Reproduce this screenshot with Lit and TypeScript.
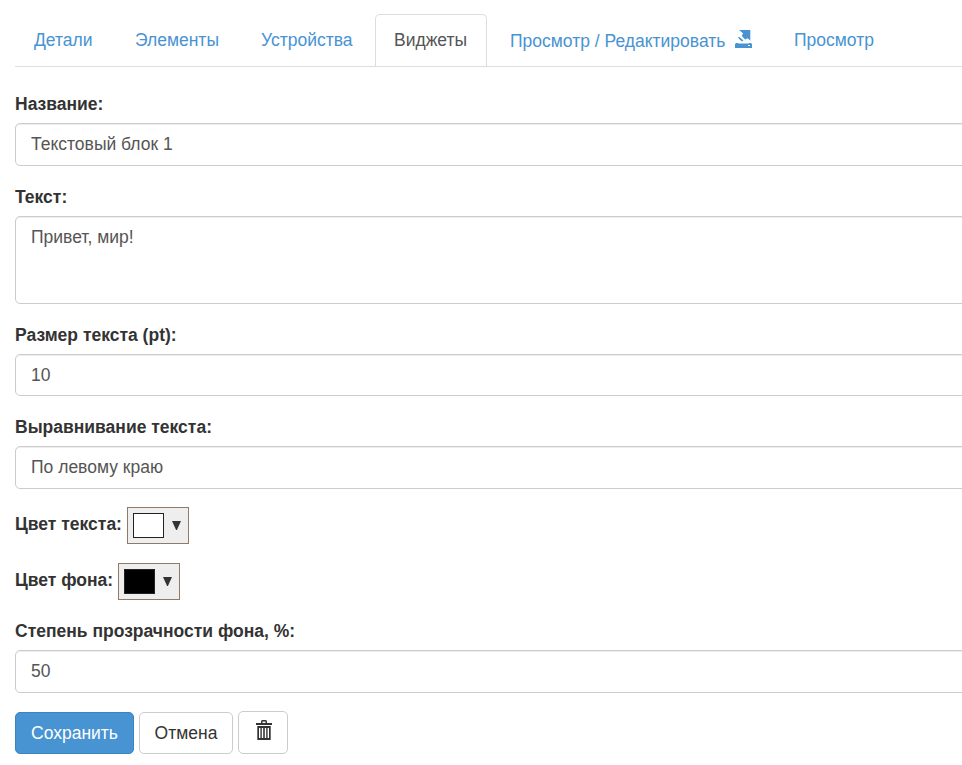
import { LitElement, html, css, svg } from "lit";
import { customElement, property } from "lit/decorators.js";

const exportIcon = svg`<svg class="export" width="18" height="18" viewBox="0 0 18 18" fill="currentColor">
  <path d="M4 0H15.3V10.6L12.6 8.2L10.2 9.6L6.8 6L8 3.2Z"/>
  <path d="M2.8 7.2H4.8L8.4 10.6L7 11.6L5 9.8Z"/>
  <path fill-rule="evenodd" d="M1 13H2.5L3.5 13.6H13.5L14.5 13H16L17 14.2V18H0V14.2ZM13 15V16H15V15Z"/>
</svg>`;

const trashIcon = svg`<svg class="trash" width="18" height="21" viewBox="0 0 18 21" fill="currentColor">
  <path d="M1 3H6V1.5Q6 0 7.5 0H10.5Q12 0 12 1.5V3H17V5H1ZM7.5 1.5V3H10.5V1.5Z" fill-rule="evenodd"/>
  <path fill-rule="evenodd" d="M2.3 6H15.7V20H2.3ZM4 8V18H5.4V8ZM6.8 8V18H8.2V8ZM9.8 8V18H11.2V8ZM12.6 8V18H14V8Z"/>
</svg>`;

@customElement("form-field")
class FormField extends LitElement {
  @property() label = "";
  @property() value = "";
  static styles = css`
    :host { display: flex; flex-direction: column; }
    .label { font-weight: bold; color: #333; line-height: 27px; height: 25px; margin-bottom: 7px; white-space: nowrap; }
    .control {
      flex: 1; box-sizing: border-box; border: 1px solid #ccc; border-radius: 5px; background: #fff;
      box-shadow: inset 0 1px 1px rgba(0, 0, 0, 0.075); color: #555; padding: 8px 15px 6px; line-height: 25px;
    }
  `;
  render() {
    return html`<div class="label">${this.label}</div><div class="control">${this.value}</div>`;
  }
}

@customElement("color-field")
class ColorField extends LitElement {
  @property() label = "";
  static styles = css`
    :host { display: flex; height: 37px; }
    .label { font-weight: bold; color: #333; line-height: 25px; margin-top: 5px; white-space: nowrap; width: var(--label-width); }
    .picker { box-sizing: border-box; width: 62px; height: 37px; border: 1px solid #917a63; background: #eee; padding: 5px; display: flex; gap: 8px; }
    .swatch { box-sizing: border-box; width: 31px; height: 25px; border: 1px solid #222; background: var(--swatch); }
    .arrow { width: 9px; height: 9px; margin-top: 8px; fill: #333; }
  `;
  render() {
    return html`<div class="label">${this.label}</div>
      <div class="picker"><div class="swatch"></div><svg class="arrow" viewBox="0 0 9 9"><path d="M0 0H9L4.9 9H4.1Z" /></svg></div>`;
  }
}

@customElement("app-root")
class AppRoot extends LitElement {
  static styles = css`
    :host {
      display: block; box-sizing: border-box; width: 100%; height: 765px; overflow: hidden; padding: 14px 0 0 15px; background: #fff;
      font-family: "Liberation Sans", Arial, sans-serif; font-size: 17.5px; color: #333;
    }
    .tabs { display: grid; grid-template-columns: 101px 126px 133px 112px 4px 284px 1fr; height: 53px; box-sizing: border-box; border-bottom: 1px solid #ddd; }
    .tab { box-sizing: border-box; padding: 14px 0 0 19px; line-height: 25px; color: #4893d2; white-space: nowrap; }
    .active { border: 1px solid #ddd; border-bottom: 0; border-radius: 5px 5px 0 0; background: #fff; color: #555; padding: 13px 0 0 18px; height: 52px; }
    .wide { grid-column: 6; padding-top: 15px; display: flex; }
    .export { margin: 1px 0 0 10px; }
    form { display: flex; flex-direction: column; margin: 24px -10px 0 0; }
    .name { height: 75px; margin-bottom: 18px; }
    .text { height: 120px; margin-bottom: 18px; }
    .size { height: 74px; margin-bottom: 18px; }
    .align { height: 75px; margin-bottom: 18px; }
    .fore { --label-width: 112px; --swatch: #fff; margin-bottom: 19px; }
    .back { --label-width: 103px; --swatch: #000; margin-bottom: 18px; }
    .opacity { height: 75px; margin-bottom: 18px; }
    .actions { display: flex; align-items: flex-end; }
    button { box-sizing: border-box; height: 42px; border: 1px solid #ccc; border-radius: 5px; background: #fff; color: #333; font: inherit; padding: 0; line-height: 25px; white-space: nowrap; }
    .save { width: 119px; background: #4893d2; border-color: #3a83c1; color: #fff; margin-right: 5px; }
    .cancel { width: 94px; margin-right: 5px; }
    .remove { width: 50px; height: 43px; display: flex; padding: 8px 0 0 16px; align-items: flex-start; }
  `;
  render() {
    return html`
      <nav class="tabs">
        <a class="tab">Детали</a><a class="tab">Элементы</a><a class="tab">Устройства</a>
        <a class="tab active">Виджеты</a>
        <a class="tab wide"><span>Просмотр / Редактировать</span>${exportIcon}</a>
        <a class="tab">Просмотр</a>
      </nav>
      <form>
        <form-field class="name" label="Название:" value="Текстовый блок 1"></form-field>
        <form-field class="text" label="Текст:" value="Привет, мир!"></form-field>
        <form-field class="size" label="Размер текста (pt):" value="10"></form-field>
        <form-field class="align" label="Выравнивание текста:" value="По левому краю"></form-field>
        <color-field class="fore" label="Цвет текста:"></color-field>
        <color-field class="back" label="Цвет фона:"></color-field>
        <form-field class="opacity" label="Степень прозрачности фона, %:" value="50"></form-field>
        <div class="actions">
          <button type="button" class="save">Сохранить</button>
          <button type="button" class="cancel">Отмена</button>
          <button type="button" class="remove" aria-label="Удалить">${trashIcon}</button>
        </div>
      </form>
    `;
  }
}
